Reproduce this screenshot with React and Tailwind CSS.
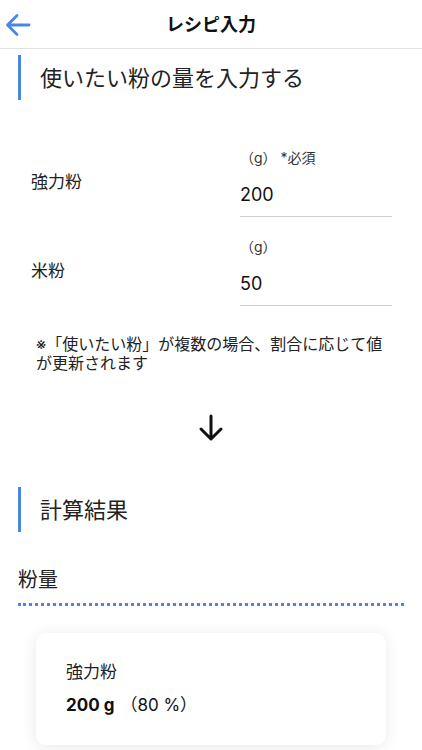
import React from "react";

const font = { fontFamily: 'Inter, "Noto Sans CJK JP", sans-serif' };

const SectionTitle = ({ children }) => (
  <div className="flex items-center h-[45px] ml-[18px]">
    <div className="w-[3px] h-full bg-[#4a86e3]" />
    <div className="ml-[19px] text-[22px] text-[#222] leading-none">{children}</div>
  </div>
);

const FlourInput = ({ name, unit, value }) => (
  <div className="flex items-center pl-[31px]">
    <div className="w-[209px] text-[17px] text-[#222]">{name}</div>
    <div className="w-[152px] border-b border-[#cfcfcf] pb-[8px]">
      <div className="h-[20px] text-[14px] leading-[20px] text-[#333]">{unit}</div>
      <div className="mt-[14px] h-[26px] text-[18px] leading-[26px] text-[#111]">{value}</div>
    </div>
  </div>
);

export default function App() {
  return (
    <div className="w-[422px] h-[750px] overflow-hidden bg-white" style={font}>
      {/* header */}
      <div className="relative h-[49px] border-b border-[#e3e3e3] flex items-center justify-center">
        <button className="absolute left-[4px] top-[11px]">
          <svg width="28" height="28" viewBox="0 0 28 28" fill="none">
            <path d="M25 14H3.5M13 4.5L3.5 14l9.5 9.5" stroke="#4a86e3" strokeWidth="2.8" strokeLinecap="round" strokeLinejoin="round" />
          </svg>
        </button>
        <div className="text-[18px] font-bold text-[#111]">レシピ入力</div>
      </div>

      <div className="mt-[6px]">
        <SectionTitle>使いたい粉の量を入力する</SectionTitle>
      </div>

      <div className="mt-[48px] flex flex-col gap-[20px]">
        <FlourInput name="強力粉" unit="（g） *必須" value="200" />
        <FlourInput name="米粉" unit="（g）" value="50" />
      </div>

      <div className="mt-[29px] pl-[36px] pr-[30px] text-[16px] leading-[19px] text-[#222]">
        ※「使いたい粉」が複数の場合、割合に応じて値が更新されます
      </div>

      <div className="mt-[41px] flex justify-center">
        <svg width="26" height="28" viewBox="0 0 26 28" fill="none">
          <path d="M13 2v23M3 15l10 10 10-10" stroke="#111" strokeWidth="3" strokeLinecap="round" strokeLinejoin="round" />
        </svg>
      </div>

      <div className="mt-[45px]">
        <SectionTitle>計算結果</SectionTitle>
      </div>

      <div className="mt-[36px] mx-[18px] text-[20px] leading-[24px] text-[#222] pb-[11px] border-b-[3px] border-dotted border-[#4a86e3]">
        粉量
      </div>

      <div className="mt-[27px] mx-[36px] rounded-[10px] bg-white shadow-[0_2px_16px_rgba(0,0,0,0.09)] pl-[30px] pt-[27px] pb-[28px]">
        <div className="text-[17px] leading-[24px] text-[#222]">強力粉</div>
        <div className="mt-[9px] text-[17px] leading-[24px] text-[#111]">
          <span className="font-bold">200 g</span>
          <span className="ml-[6px]">（80 %）</span>
        </div>
      </div>
    </div>
  );
}
